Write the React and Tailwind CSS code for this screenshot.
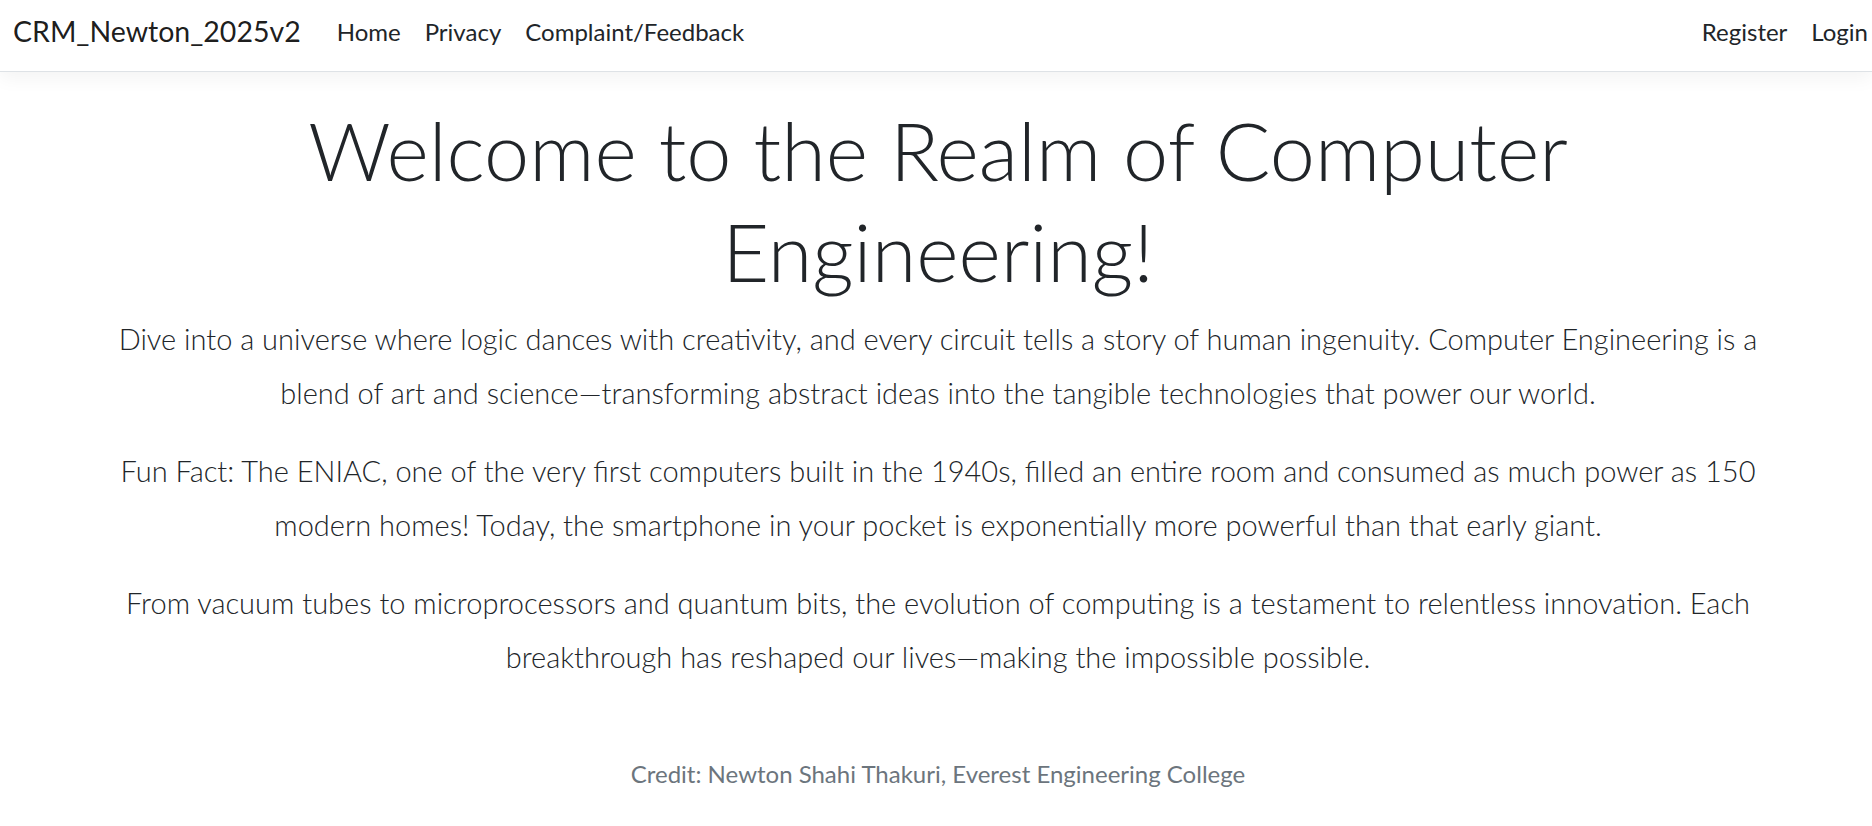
export default function App() {
  return (
    <div className="min-h-screen bg-white font-['Lato',sans-serif] text-[#212529]">
      <header className="flex h-[72px] items-center border-b border-[#dee2e6] bg-white pb-[8px] shadow-[0_6px_18px_rgba(0,0,0,0.05)]">
        <nav className="flex w-full items-center pl-[13px]">
          <a href="#" className="mr-[24px] whitespace-nowrap text-[28.5px] leading-[45px] text-[rgba(0,0,0,0.9)]">
            CRM_Newton_2025v2
          </a>
          <ul className="flex flex-1 items-center">
            <li>
              <a href="#" className="block px-[12px] text-[24px] leading-[36px] text-[#212529]">Home</a>
            </li>
            <li>
              <a href="#" className="block px-[12px] text-[24px] leading-[36px] text-[#212529]">Privacy</a>
            </li>
            <li>
              <a href="#" className="block px-[12px] text-[24px] leading-[36px] text-[#212529]">Complaint/Feedback</a>
            </li>
          </ul>
          <ul className="flex items-center">
            <li>
              <a href="#" className="block px-[12px] text-[24px] leading-[36px] text-[#212529]">Register</a>
            </li>
            <li>
              <a href="#" className="block pl-[12px] pr-[4px] text-[24px] leading-[36px] text-[#212529]">Login</a>
            </li>
          </ul>
        </nav>
      </header>

      <main className="mx-auto w-[1674px] pl-[4px] pt-[27px] text-center">
        <h1 className="mb-[11px] text-[81px] font-light leading-[101px]">
          Welcome to the Realm of Computer
          <br />
          Engineering!
        </h1>
        <p className="mb-[24px] text-[29px] font-light leading-[54px]">
          Dive into a universe where logic dances with creativity, and every circuit tells a story of human ingenuity. Computer Engineering is a
          <br />
          blend of art and science—transforming abstract ideas into the tangible technologies that power our world.
        </p>
        <p className="mb-[24px] text-[29px] font-light leading-[54px]">
          Fun Fact: The ENIAC, one of the very first computers built in the 1940s, filled an entire room and consumed as much power as 150
          <br />
          modern homes! Today, the smartphone in your pocket is exponentially more powerful than that early giant.
        </p>
        <p className="mb-[24px] text-[29px] font-light leading-[54px]">
          From vacuum tubes to microprocessors and quantum bits, the evolution of computing is a testament to relentless innovation. Each
          <br />
          breakthrough has reshaped our lives—making the impossible possible.
        </p>
        <p className="mt-[72px] text-[24px] leading-[36px] text-[#6c757d]">
          Credit: Newton Shahi Thakuri, Everest Engineering College
        </p>
      </main>
    </div>
  );
}
